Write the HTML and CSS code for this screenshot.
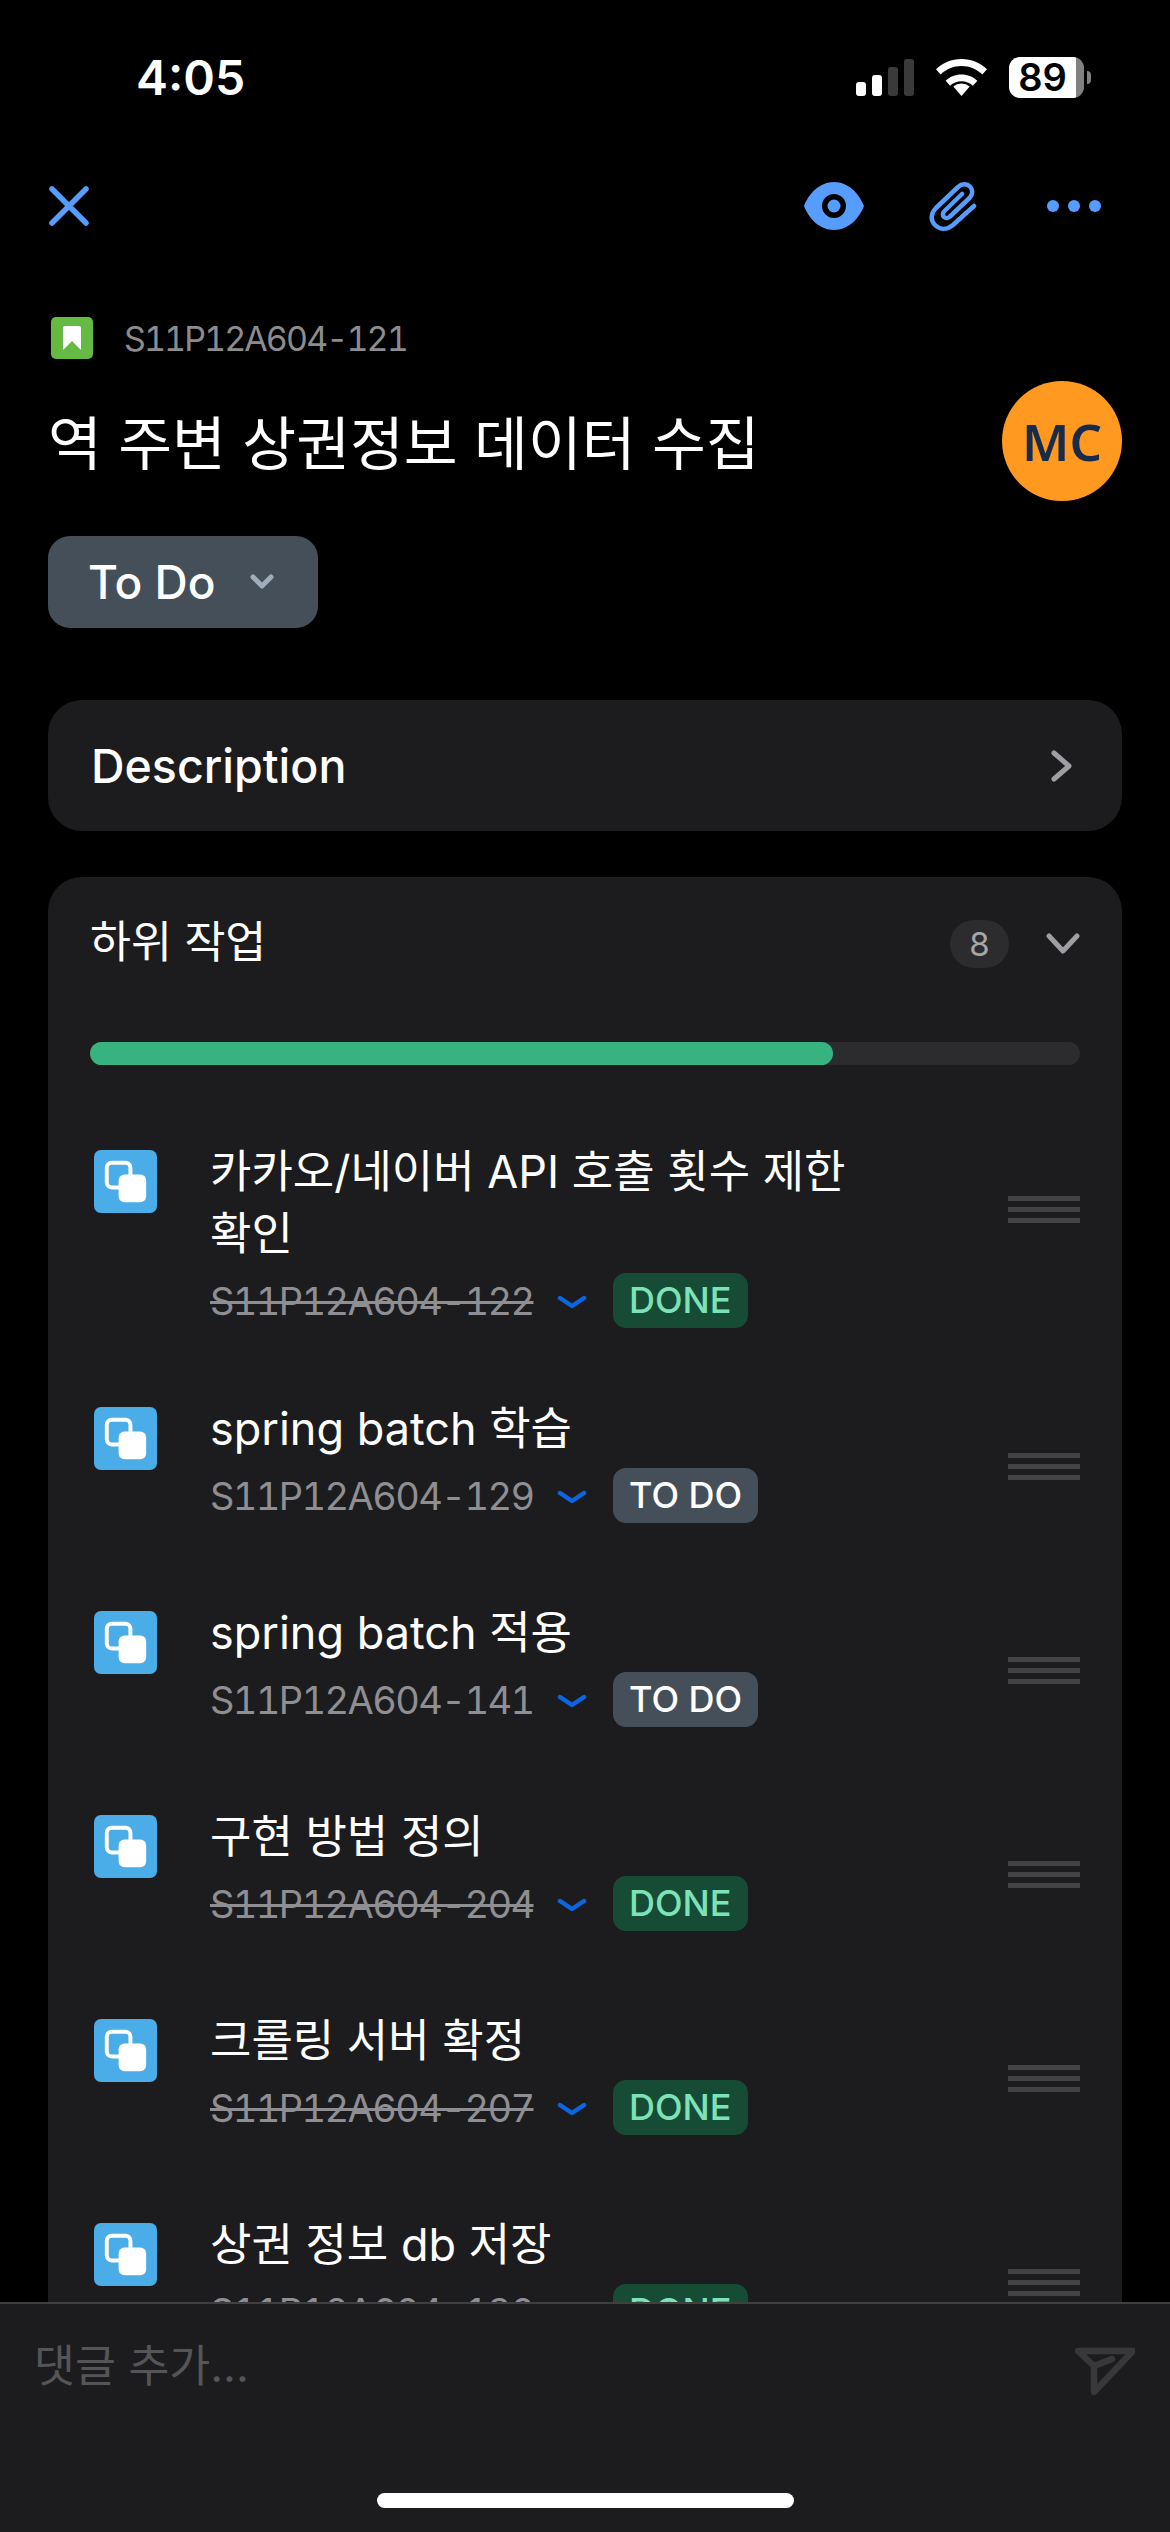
FILE: index.html
```html
<!DOCTYPE html>
<html lang="ko">
<head>
    <meta charset="UTF-8">
    <meta name="viewport" content="width=device-width, initial-scale=1.0">
    <title>S11P12A604-121</title>
    <link rel="stylesheet" href="styles.css">
</head>
<body>
    <div class="screen">
        <!-- Status bar -->
        <div class="status-bar">
            <span class="time">4:05</span>
            <div class="status-icons">
                <div class="signal">
                    <i class="bar bar1"></i><i class="bar bar2"></i><i class="bar bar3"></i><i class="bar bar4"></i>
                </div>
                <svg class="wifi" viewBox="0 0 51 37"><path d="M25.5 37l-8.200-9.500a12.500 12.500 0 0 1 16.400 0zM25.500 15.500c6.300 0 11.900 2.400 15.900 6.300l-4.500 5c-3-2.800-7-4.500-11.400-4.500s-8.400 1.700-11.400 4.500l-4.500-5c4-3.900 9.600-6.300 15.900-6.300zM25.500 0c10 0 18.900 3.900 25.500 10.200l-4.700 5.200C41 10.200 33.600 7 25.500 7S10 10.200 4.700 15.400L0 10.200C6.600 3.900 15.500 0 25.500 0z" fill="#fff"/></svg>
                <div class="battery"><span class="battery-level">89</span></div>
                <i class="battery-cap"></i>
            </div>
        </div>

        <!-- Toolbar -->
        <div class="toolbar">
            <svg class="icon-close" viewBox="0 0 42 42"><path d="M4 4l34 34M38 4L4 38" stroke="#579dff" stroke-width="5.500" stroke-linecap="round"/></svg>
            <div class="toolbar-right">
                <svg class="icon-eye" viewBox="0 0 60 48"><path fill-rule="evenodd" d="M30 0c14 0 25 11 30 24-5 13-16 24-30 24S5 37 0 24C5 11 16 0 30 0zm0 12a12 12 0 1 0 0 24 12 12 0 0 0 0-24zm0 5.500a6.500 6.500 0 1 1 0 13 6.500 6.500 0 0 1 0-13z" fill="#579dff"/></svg>
                <svg class="icon-clip" viewBox="0 0 48 50"><path d="M45 25L24 44c-6 5-13 5-18 0s-4-12 1-17L29 6c4-3.500 9-3.500 12-.5s3 8-.5 11.500L21 35.500c-2 2-4.500 2-6 .5s-1.500-4 .5-6L33 13" fill="none" stroke="#579dff" stroke-width="4.500" stroke-linecap="round" stroke-linejoin="round"/></svg>
                <div class="dots"><i></i><i></i><i></i></div>
            </div>
        </div>

        <!-- Issue header -->
        <div class="issue-key">
            <svg class="icon-story" viewBox="0 0 42 42"><rect width="42" height="42" rx="5" fill="#65ba43"/><path d="M12 11a2 2 0 0 1 2-2h14a2 2 0 0 1 2 2v22l-9-9-9 9z" fill="#fff"/></svg>
            <span>S11P12A604-121</span>
        </div>
        <div class="issue-head">
            <h1 class="issue-title">역 주변 상권정보 데이터 수집</h1>
            <div class="avatar">MC</div>
        </div>
        <button class="status-btn">
            To Do
            <svg class="status-chevron" viewBox="0 0 26 18"><path d="M4 4l9 9 9-9" fill="none" stroke="#9fadbc" stroke-width="5" stroke-linecap="round" stroke-linejoin="round"/></svg>
        </button>

        <!-- Description -->
        <div class="card description">
            <span>Description</span>
            <svg class="chevron-right" viewBox="0 0 24 34"><path d="M4 4l15 13L4 30" fill="none" stroke="#9f9fa3" stroke-width="5" stroke-linecap="round" stroke-linejoin="round"/></svg>
        </div>

        <!-- Subtasks -->
        <div class="card subtasks">
            <div class="subtasks-head">
                <span class="subtasks-title">하위 작업</span>
                <span class="count">8</span>
                <svg class="chevron-down" viewBox="0 0 34 22"><path d="M3 3l14 15L31 3" fill="none" stroke="#9f9fa3" stroke-width="5" stroke-linecap="round" stroke-linejoin="round"/></svg>
            </div>
            <div class="progress"><div class="progress-fill" style="width: 75%"></div></div>

            <div class="task">
                <svg class="icon-subtask" viewBox="0 0 64 64"><use href="#subtask"/></svg>
                <div class="task-body">
                    <div class="task-title">카카오/네이버 API 호출 횟수 제한<br>확인</div>
                    <div class="task-meta">
                        <span class="task-key done">S11P12A604-122</span>
                        <svg class="priority" viewBox="0 0 30 14"><use href="#low"/></svg>
                        <span class="chip chip-done">DONE</span>
                    </div>
                </div>
                <div class="handle"><i></i><i></i><i></i></div>
            </div>
            <div class="task">
                <svg class="icon-subtask" viewBox="0 0 64 64"><use href="#subtask"/></svg>
                <div class="task-body">
                    <div class="task-title">spring batch 학습</div>
                    <div class="task-meta">
                        <span class="task-key">S11P12A604-129</span>
                        <svg class="priority" viewBox="0 0 30 14"><use href="#low"/></svg>
                        <span class="chip chip-todo">TO DO</span>
                    </div>
                </div>
                <div class="handle"><i></i><i></i><i></i></div>
            </div>
            <div class="task">
                <svg class="icon-subtask" viewBox="0 0 64 64"><use href="#subtask"/></svg>
                <div class="task-body">
                    <div class="task-title">spring batch 적용</div>
                    <div class="task-meta">
                        <span class="task-key">S11P12A604-141</span>
                        <svg class="priority" viewBox="0 0 30 14"><use href="#low"/></svg>
                        <span class="chip chip-todo">TO DO</span>
                    </div>
                </div>
                <div class="handle"><i></i><i></i><i></i></div>
            </div>
            <div class="task">
                <svg class="icon-subtask" viewBox="0 0 64 64"><use href="#subtask"/></svg>
                <div class="task-body">
                    <div class="task-title">구현 방법 정의</div>
                    <div class="task-meta">
                        <span class="task-key done">S11P12A604-204</span>
                        <svg class="priority" viewBox="0 0 30 14"><use href="#low"/></svg>
                        <span class="chip chip-done">DONE</span>
                    </div>
                </div>
                <div class="handle"><i></i><i></i><i></i></div>
            </div>
            <div class="task">
                <svg class="icon-subtask" viewBox="0 0 64 64"><use href="#subtask"/></svg>
                <div class="task-body">
                    <div class="task-title">크롤링 서버 확정</div>
                    <div class="task-meta">
                        <span class="task-key done">S11P12A604-207</span>
                        <svg class="priority" viewBox="0 0 30 14"><use href="#low"/></svg>
                        <span class="chip chip-done">DONE</span>
                    </div>
                </div>
                <div class="handle"><i></i><i></i><i></i></div>
            </div>
            <div class="task">
                <svg class="icon-subtask" viewBox="0 0 64 64"><use href="#subtask"/></svg>
                <div class="task-body">
                    <div class="task-title">상권 정보 db 저장</div>
                    <div class="task-meta">
                        <span class="task-key done">S11P12A604-130</span>
                        <svg class="priority" viewBox="0 0 30 14"><use href="#low"/></svg>
                        <span class="chip chip-done">DONE</span>
                    </div>
                </div>
                <div class="handle"><i></i><i></i><i></i></div>
            </div>
        </div>

        <!-- Comment bar -->
        <div class="comment-bar">
            <div class="comment-row">
                <span class="comment-placeholder">댓글 추가...</span>
                <svg class="icon-send" viewBox="0 0 60 48"><path d="M3 4h55L19 45V19L3 4zM19 19l18-7" fill="none" stroke="#38383a" stroke-width="6.500" stroke-linejoin="round" stroke-linecap="round"/></svg>
            </div>
            <div class="home-indicator"></div>
        </div>
    </div>

    <!-- Shared icons -->
    <svg class="defs" width="0" height="0">
        <symbol id="subtask" viewBox="0 0 64 64">
            <rect width="64" height="64" rx="7" fill="#4bade8"/>
            <rect x="13" y="13" width="24" height="25" rx="5" fill="none" stroke="#fff" stroke-width="4"/>
            <rect x="25" y="25" width="28" height="28" rx="6" fill="#fff"/>
        </symbol>
        <symbol id="low" viewBox="0 0 30 14">
            <path d="M3 3l12 8 12-8" fill="none" stroke="#0c66e4" stroke-width="4.500" stroke-linecap="round" stroke-linejoin="round"/>
        </symbol>
    </svg>
</body>
</html>
```
FILE: styles.css
```css
/* General Styles */
* {
    box-sizing: border-box;
}
body {
    margin: 0;
    background: #000;
    color: #fff;
    font-family: 'Inter', 'Noto Sans CJK KR', sans-serif;
}
.screen {
    position: relative;
    width: 1170px;
    height: 2532px;
    overflow: hidden;
    padding: 0 48px;
}
.defs {
    position: absolute;
}

/* Status bar */
.status-bar {
    height: 152px;
    margin-right: -48px;
    padding: 55px 79px 0 88px;
    display: flex;
    justify-content: space-between;
    align-items: flex-start;
}
.time {
    font-size: 48px;
    font-weight: 600;
    line-height: 46px;
}
.status-icons {
    display: flex;
    align-items: flex-start;
    margin-top: 2px;
}
.signal {
    display: flex;
    align-items: flex-end;
    gap: 6px;
    height: 37px;
    margin-top: 2px;
}
.bar {
    width: 10px;
    border-radius: 3px;
    background: #fff;
}
.bar1 { height: 14px; }
.bar2 { height: 21px; }
.bar3 { height: 29px; background: #3a3a3a; }
.bar4 { height: 37px; background: #3a3a3a; }
.wifi {
    width: 51px;
    height: 37px;
    margin: 2px 22px 0 22px;
}
.battery {
    width: 75px;
    height: 41px;
    border-radius: 11px;
    background: linear-gradient(90deg, #fff 89%, #808080 89%);
    padding-right: 8px;
    text-align: center;
}
.battery-level {
    color: #000;
    font-size: 38px;
    font-weight: 600;
    line-height: 41px;
}
.battery-cap {
    width: 4px;
    height: 13px;
    margin: 14px 0 0 3px;
    border-radius: 0 4px 4px 0;
    background: #808080;
}

/* Toolbar */
.toolbar {
    height: 82px;
    display: flex;
    justify-content: space-between;
    align-items: center;
    margin-top: 13px;
    margin-right: 21px;
}
.icon-close {
    width: 42px;
    height: 42px;
}
.toolbar-right {
    display: flex;
    align-items: center;
}
.icon-eye {
    width: 60px;
    height: 48px;
}
.icon-clip {
    width: 48px;
    height: 50px;
    margin: 0 70px 0 65px;
}
.dots {
    display: flex;
    gap: 9px;
}
.dots i {
    width: 12px;
    height: 12px;
    border-radius: 50%;
    background: #579dff;
}

/* Issue header */
.issue-key {
    display: flex;
    align-items: center;
    gap: 31px;
    margin: 70px 0 0 3px;
    color: #8c8c8f;
    font-size: 34px;
    font-variant-numeric: tabular-nums;
    letter-spacing: -1.900px;
    height: 42px;
}
.icon-story {
    width: 42px;
    height: 42px;
}
.issue-head {
    display: flex;
    justify-content: space-between;
    align-items: center;
    margin-top: 22px;
}
.issue-title {
    margin: 0;
    padding-bottom: 4px;
    font-size: 58.500px;
    font-weight: 400;
}
.avatar {
    width: 120px;
    height: 120px;
    border-radius: 50%;
    background: #ff991f;
    color: #172b4d;
    font-family: 'Noto Sans', sans-serif;
    font-size: 51px;
    font-weight: 600;
    display: flex;
    align-items: center;
    justify-content: center;
}
.status-btn {
    width: 270px;
    height: 92px;
    margin-top: 35px;
    padding: 0 0 0 40px;
    border: none;
    border-radius: 22px;
    background: #454f59;
    color: #fff;
    font-family: inherit;
    font-size: 46px;
    font-weight: 500;
    display: flex;
    align-items: center;
    gap: 34px;
}
.status-chevron {
    width: 26px;
    height: 18px;
}

/* Cards */
.card {
    background: #1c1c1e;
    border-radius: 34px;
}
.description {
    height: 131px;
    margin-top: 72px;
    padding: 0 48px 0 43px;
    font-size: 46.500px;
    font-weight: 500;
    display: flex;
    justify-content: space-between;
    align-items: center;
}
.chevron-right {
    width: 24px;
    height: 34px;
}
.subtasks {
    margin-top: 46px;
    padding: 43px 42px 0 42px;
}
.subtasks-head {
    height: 48px;
    display: flex;
    align-items: center;
}
.subtasks-title {
    flex: 1;
    font-size: 44.500px;
    line-height: 48px;
    padding-bottom: 4px;
}
.count {
    width: 59px;
    height: 48px;
    border-radius: 24px;
    background: #2c2c2e;
    color: #a6a6a8;
    font-size: 33px;
    text-align: center;
    line-height: 48px;
}
.chevron-down {
    width: 34px;
    height: 22px;
    margin-left: 37px;
}

/* Progress bar */
.progress {
    height: 23px;
    margin-top: 74px;
    margin-bottom: 76px;
    border-radius: 12px;
    background: #2c2c2e;
}
.progress-fill {
    height: 100%;
    border-radius: 12px;
    background: #36b37e;
}

/* Task rows */
.task {
    display: flex;
    align-items: flex-start;
    min-height: 204px;
    padding-bottom: 70px;
}
.icon-subtask {
    flex: none;
    width: 63px;
    height: 63px;
    margin: 9px 0 0 4px;
}
.task-body {
    flex: 1;
    margin-left: 53px;
}
.task-title {
    font-size: 45px;
    line-height: 62px;
}
.task-meta {
    display: flex;
    align-items: center;
    margin-top: 8px;
    height: 55px;
}
.task-key {
    color: #8e8e93;
    font-size: 38px;
    font-variant-numeric: tabular-nums;
    letter-spacing: -1.600px;
    width: 321px;
    white-space: nowrap;
}
.task-key.done {
    text-decoration: line-through;
}
.priority {
    width: 30px;
    height: 14px;
    margin: 2px 26px 0 26px;
}
.chip {
    height: 55px;
    padding: 0 16px;
    border-radius: 13px;
    font-size: 36px;
    font-weight: 500;
    line-height: 55px;
}
.chip-done {
    background: #164b35;
    color: #7ee2b8;
}
.chip-todo {
    background: #454f59;
    color: #fff;
}
.handle {
    flex: none;
    width: 72px;
    margin-top: 55px;
    display: flex;
    flex-direction: column;
    gap: 6px;
}
.handle i {
    height: 5px;
    background: #434346;
}

/* Comment bar */
.comment-bar {
    position: absolute;
    left: 0;
    right: 0;
    bottom: 0;
    height: 230px;
    border-top: 2px solid #3f3f42;
    background: #1c1c1e;
}
.comment-row {
    display: flex;
    justify-content: space-between;
    align-items: flex-start;
    padding: 26px 35px 0 34px;
}
.comment-placeholder {
    color: #555558;
    font-size: 44.500px;
}
.icon-send {
    width: 60px;
    height: 48px;
    margin-top: 17px;
}
.home-indicator {
    position: absolute;
    left: 377px;
    bottom: 24px;
    width: 417px;
    height: 15px;
    border-radius: 8px;
    background: #fff;
}
```
